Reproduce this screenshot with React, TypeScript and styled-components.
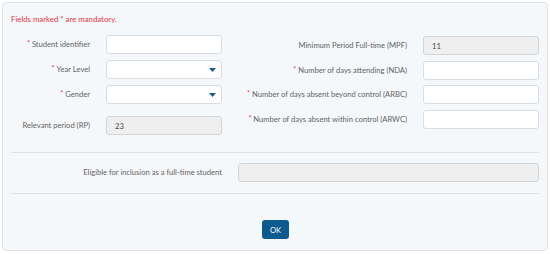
import styled, { createGlobalStyle } from "styled-components";

const GlobalStyle = createGlobalStyle`
    body {
        margin: 0;
        background: #ffffff;
        font-family: Lato, "Open Sans", "Liberation Sans", sans-serif;
    }
    * {
        box-sizing: border-box;
    }
`;

const Panel = styled.div`
    margin: 2px;
    width: 546px;
    height: 249px;
    padding: 10px 8px 11px;
    border: 1px solid #dfe3e8;
    border-radius: 4px;
    background: #f5f8fb;
    display: flex;
    flex-direction: column;
`;

const Mandatory = styled.p`
    margin: 0;
    height: 12px;
    line-height: 12px;
    font-size: 7.8px;
    color: #e8323f;
`;

const Columns = styled.div`
    margin-top: 10px;
    display: flex;
`;

const Column = styled.div<{ offset: number; gap: number }>`
    margin-top: ${props => props.offset}px;
    display: flex;
    flex-direction: column;
    gap: ${props => props.gap}px;
`;

const Row = styled.div<{ labelWidth: number; extra?: number }>`
    display: grid;
    grid-template-columns: ${props => props.labelWidth}px 1fr;
    column-gap: 16px;
    align-items: center;
    margin-top: ${props => props.extra || 0}px;
`;

const Label = styled.label`
    text-align: right;
    font-size: 7.6px;
    line-height: 10px;
    color: #636363;
    white-space: nowrap;
    margin-top: -2px;
`;

const Star = styled.span`
    color: #e8323f;
    font-size: 7px;
    margin-right: 2px;
    vertical-align: 1px;
`;

const Box = styled.div<{ disabled?: boolean; width?: number }>`
    width: ${props => (props.width ? `${props.width}px` : "100%")};
    height: 19px;
    border: 1px solid ${props => (props.disabled ? "#d2d4d6" : "#d9dde1")};
    border-radius: 3px;
    background: ${props => (props.disabled ? "#efefef" : "#ffffff")};
    padding: 0 8px;
    display: flex;
    align-items: center;
    font-size: 7.6px;
    color: #444;
`;

const SelectBox = styled(Box)`
    justify-content: flex-end;
    padding-right: 5px;
`;

const Divider = styled.hr<{ top: number }>`
    margin: ${props => props.top}px 0 0;
    border: 0;
    height: 1px;
    background: #dde2e7;
`;

const Footer = styled.div`
    margin-top: 26px;
    display: flex;
    justify-content: center;
`;

const OkButton = styled.button`
    margin-left: 1px;
    width: 27px;
    height: 19px;
    border: 0;
    border-radius: 3px;
    background: #0b5b8f;
    color: #ffffff;
    font-family: inherit;
    font-size: 7.6px;
    padding: 0;
`;

const Caret = () => (
    <svg width="7" height="4" viewBox="0 0 7 4">
        <path d="M0 0H7L3.5 4Z" fill="#1a5a8e" />
    </svg>
);

const Field = ({
    label,
    required,
    labelWidth,
    extra,
    children,
}: {
    label: string;
    required?: boolean;
    labelWidth: number;
    extra?: number;
    children: React.ReactNode;
}) => (
    <Row labelWidth={labelWidth} extra={extra}>
        <Label>
            {required && <Star>*</Star>}
            {label}
        </Label>
        {children}
    </Row>
);

const App = () => {
    return (
        <>
            <GlobalStyle />
            <Panel>
                <Mandatory>Fields marked * are mandatory.</Mandatory>
                <Columns>
                    <Column offset={0} gap={6} style={{ width: 229 }}>
                        <Field label="Student identifier" required labelWidth={79}>
                            <Box width={116} />
                        </Field>
                        <Field label="Year Level" required labelWidth={79}>
                            <SelectBox width={116}>
                                <Caret />
                            </SelectBox>
                        </Field>
                        <Field label="Gender" required labelWidth={79}>
                            <SelectBox width={116}>
                                <Caret />
                            </SelectBox>
                        </Field>
                        <Field label="Relevant period (RP)" labelWidth={79} extra={6}>
                            <Box width={116} disabled>
                                23
                            </Box>
                        </Field>
                    </Column>
                    <Column offset={1} gap={5.5} style={{ flex: 1 }}>
                        <Field label="Minimum Period Full-time (MPF)" labelWidth={167}>
                            <Box disabled>11</Box>
                        </Field>
                        <Field label="Number of days attending (NDA)" required labelWidth={167}>
                            <Box />
                        </Field>
                        <Field
                            label="Number of days absent beyond control (ARBC)"
                            required
                            labelWidth={167}
                        >
                            <Box />
                        </Field>
                        <Field
                            label="Number of days absent within control (ARWC)"
                            required
                            labelWidth={167}
                        >
                            <Box />
                        </Field>
                    </Column>
                </Columns>
                <Divider top={17} />
                <Row labelWidth={211} extra={10}>
                    <Label>Eligible for inclusion as a full-time student</Label>
                    <Box disabled />
                </Row>
                <Divider top={11} />
                <Footer>
                    <OkButton>OK</OkButton>
                </Footer>
            </Panel>
        </>
    );
};

export default App;
